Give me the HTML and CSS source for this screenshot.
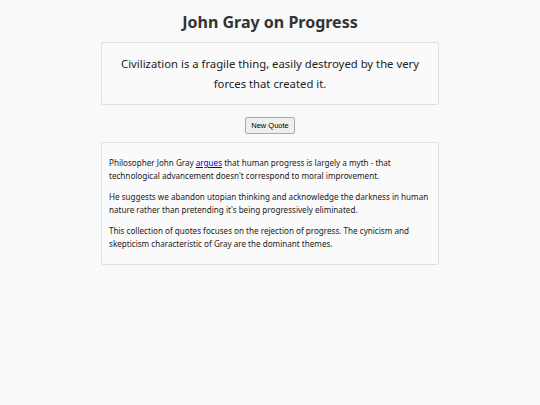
FILE: index.html
```html
<!DOCTYPE html>
<html lang="en">
<head>
    <meta charset="UTF-8">
    <meta name="viewport" content="width=device-width, initial-scale=1.0">
    <title>John Gray on Progress</title>
    <link rel="stylesheet" href="styles.css">
</head>
<body>

    <div class="container">
        <h1>John Gray on Progress</h1>

        <div class="quote-box">
            <p id="quote">Civilization is a fragile thing, easily destroyed by the very forces that created it.</p>
        </div>

        <div class="controls">
            <button id="newQuote">New Quote</button>
        </div>

        <div class="about">
            <p>Philosopher John Gray <a href="#">argues</a> that human progress is largely a myth - that technological advancement doesn't correspond to moral improvement.</p>
            <p>He suggests we abandon utopian thinking and acknowledge the darkness in human nature rather than pretending it's being progressively eliminated.</p>
            <p>This collection of quotes focuses on the rejection of progress. The cynicism and skepticism characteristic of Gray are the dominant themes.</p>
        </div>
    </div>

</body>
</html>
```

FILE: styles.css
```css
* {
    margin: 0;
    padding: 0;
    box-sizing: border-box;
}

body {
    background-color: #f8f9fa;
    font-family: "Noto Sans", "Open Sans", sans-serif;
    color: #333;
}

.container {
    width: 338px;
    margin: 0 auto;
    padding-top: 11px;
}

h1 {
    font-size: 16px;
    font-weight: 700;
    text-align: center;
    line-height: 22px;
    margin-bottom: 9px;
}

.quote-box {
    background-color: #fafafa;
    border: 1px solid #e0e0e0;
    border-radius: 2px;
    padding: 11px 12px;
    text-align: center;
}

.quote-box p {
    font-size: 11.3px;
    line-height: 19.5px;
    color: #222;
}

.controls {
    display: flex;
    justify-content: center;
    padding: 12px 0 8px;
}

.controls button {
    font-family: "Liberation Sans", Arial, sans-serif;
    font-size: 7.5px;
    padding: 3px 5px;
    background-color: #efefef;
    border: 1px solid #aaa;
    border-radius: 2px;
    color: #000;
}

.about {
    background-color: #fafafa;
    border: 1px solid #e0e0e0;
    border-radius: 2px;
    padding: 14px 7px 14px;
}

.about p {
    font-size: 8.1px;
    line-height: 12.5px;
    color: #222;
    margin-bottom: 9px;
}

.about p:last-child {
    margin-bottom: 0;
}

.about a {
    color: #0000ee;
}
```
